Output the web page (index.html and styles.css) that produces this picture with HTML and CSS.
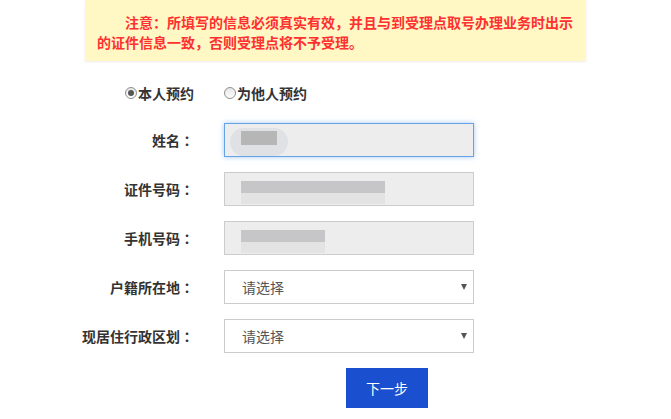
FILE: index.html
```html
<!DOCTYPE html>
<html lang="zh-CN">
<head>
  <meta charset="UTF-8" />
  <title>预约信息</title>
  <link rel="stylesheet" href="styles.css">
</head>
<body>
  <div class="notice">
    <p>注意：所填写的信息必须真实有效，并且与到受理点取号办理业务时出示的证件信息一致，否则受理点将不予受理。</p>
  </div>

  <div class="form">
    <div class="who">
      <label class="radio"><span class="dot on"></span>本人预约</label>
      <label class="radio"><span class="dot"></span>为他人预约</label>
    </div>

    <div class="rows">
      <div class="label">姓名<span lang="ja">：</span></div>
      <div class="field focus">
        <span class="smudge"></span>
        <span class="blur" style="width:36px"></span>
      </div>

      <div class="label">证件号码<span lang="ja">：</span></div>
      <div class="field">
        <span class="blur" style="width:144px"></span>
        <span class="blur low" style="width:144px"></span>
      </div>

      <div class="label">手机号码<span lang="ja">：</span></div>
      <div class="field">
        <span class="blur" style="width:84px"></span>
        <span class="blur low" style="width:84px"></span>
      </div>

      <div class="label">户籍所在地<span lang="ja">：</span></div>
      <div class="select">请选择</div>

      <div class="label">现居住行政区划<span lang="ja">：</span></div>
      <div class="select">请选择</div>

      <div></div>
      <div class="actions"><button class="next">下一步</button></div>
    </div>
  </div>
</body>
</html>
```

FILE: styles.css
```css
* { margin: 0; padding: 0; box-sizing: border-box; }

body {
  background: #fff;
  font-family: "Noto Sans CJK SC", "Liberation Sans", sans-serif;
  font-size: 14px;
  color: #333;
  text-spacing-trim: space-all;
}

/* yellow warning box */
.notice {
  width: 501px;
  margin: 0 auto;
  padding: 12px 12px 9px;
  background: #fff8c5;
  box-shadow: 0 1px 2px rgba(0,0,0,0.08);
}
.notice p {
  color: #ff3030;
  font-weight: bold;
  line-height: 20px;
  text-indent: 28px;
}

.form {
  padding-left: 80px;
}

/* self / other radio */
.who {
  display: flex;
  margin: 22px 0 20px 45px;
  height: 20px;
  align-items: center;
}
.radio {
  display: flex;
  align-items: center;
  font-weight: bold;
  width: 99px;
}
.dot {
  width: 12px;
  height: 12px;
  margin-right: 1px;
  border-radius: 50%;
  border: 1px solid #8f8f8f;
  background: linear-gradient(#e6e6e6, #fdfdfd);
  position: relative;
}
.dot.on::after {
  content: "";
  position: absolute;
  inset: 2px;
  border-radius: 50%;
  background: #555;
}

.rows {
  display: grid;
  grid-template-columns: 114px 250px;
  column-gap: 30px;
  row-gap: 15px;
  align-items: center;
}
.label {
  text-align: right;
  font-weight: bold;
  white-space: nowrap;
}

.field {
  height: 34px;
  border: 1px solid #ccc;
  background: #ededed;
  padding: 8px 0 0 16px;
  position: relative;
}
.field.focus {
  border-color: #66a3e6;
  box-shadow: 0 0 5px rgba(102,163,230,0.6);
}
.blur {
  display: block;
  height: 12px;
  background: #c6c6c8;
}
.blur.low {
  height: 11px;
  background: #e3e3e4;
}
.smudge {
  position: absolute;
  left: 5px;
  top: 4px;
  width: 58px;
  height: 28px;
  border-radius: 14px;
  background: #dfe1e4;
}
.field.focus .blur {
  position: relative;
  background: #b6b6b6;
  height: 14px;
  margin-top: -1px;
}

.select {
  height: 34px;
  border: 1px solid #ccc;
  background: #fff;
  color: #555;
  padding-left: 17px;
  line-height: 32px;
  position: relative;
}
.select::after {
  content: "";
  position: absolute;
  right: 6px;
  top: 13px;
  border-left: 3px solid transparent;
  border-right: 3px solid transparent;
  border-top: 6px solid #555;
}

.actions {
  padding-left: 122px;
}
.next {
  width: 82px;
  height: 40px;
  border: none;
  background: #1a4fd0;
  color: #fff;
  font-family: inherit;
  font-size: 14px;
}
```
